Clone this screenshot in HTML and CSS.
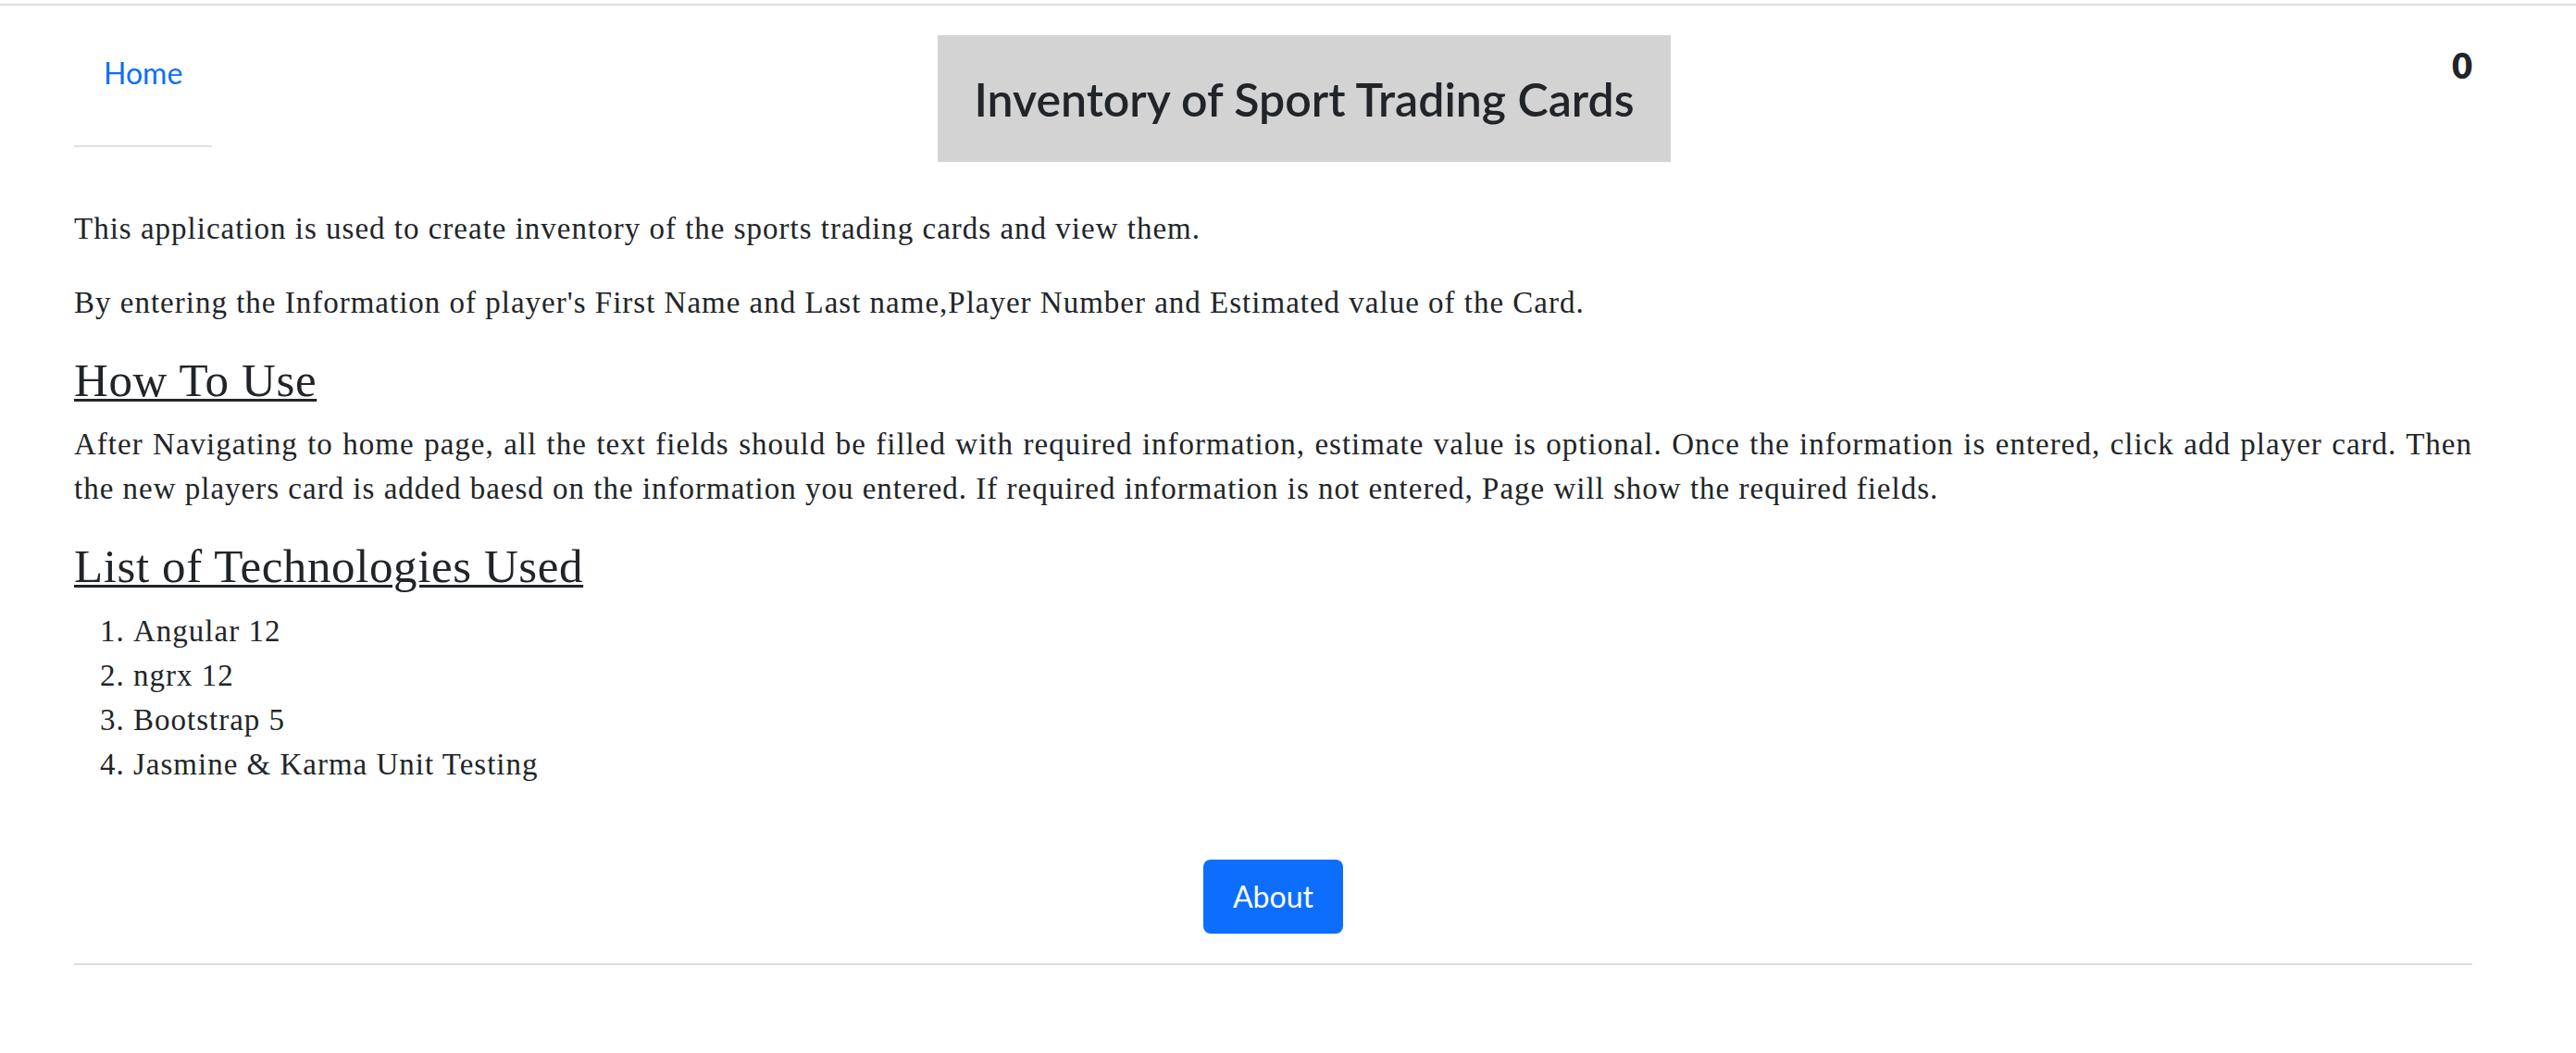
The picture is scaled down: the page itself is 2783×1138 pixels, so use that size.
FILE: index.html
```html
<!DOCTYPE html>
<html lang="en">
<head>
<meta charset="utf-8">
<title>Inventory of Sport Trading Cards</title>
<link rel="stylesheet" href="styles.css">
</head>
<body>
<div class="topline"></div>
<div class="page">
  <header class="header">
    <ul class="nav">
      <li><a class="nav-link" href="#">Home</a></li>
    </ul>
    <div class="title-box">
      <h1 class="title">Inventory of Sport Trading Cards</h1>
    </div>
    <div class="count">0</div>
  </header>
  <main class="content">
    <p class="para">This application is used to create inventory of the sports trading cards and view them.</p>
    <p class="para">By entering the Information of player's First Name and Last name,Player Number and Estimated value of the Card.</p>
    <h2 class="section-title">How To Use</h2>
    <p class="para para-justify"><span class="jline">After Navigating to home page, all the text fields should be filled with required information, estimate value is optional. Once the information is entered, click add player card. Then</span> the new players card is added baesd on the information you entered. If required information is not entered, Page will show the required fields.</p>
    <h2 class="section-title">List of Technologies Used</h2>
    <ol class="tech-list">
      <li>Angular 12</li>
      <li>ngrx 12</li>
      <li>Bootstrap 5</li>
      <li>Jasmine &amp; Karma Unit Testing</li>
    </ol>
    <div class="actions">
      <button class="btn-about" type="button">About</button>
    </div>
    <hr class="rule">
  </main>
</div>
</body>
</html>
```

FILE: styles.css
```css
html, body {
  margin: 0;
  padding: 0;
  background: #ffffff;
}

body {
  color: #212529;
  font-family: "Liberation Serif", "Times New Roman", serif;
  font-size: 33px;
  line-height: 48px;
  letter-spacing: 1px;
}

.topline {
  margin-top: 4px;
  height: 2px;
  background: #dcdde0;
}

.page {
  padding: 0 112px 0 80px;
}

.header {
  display: grid;
  grid-template-columns: 933px 792px 1fr;
  align-items: start;
  padding-top: 32px;
  margin-bottom: 48px;
  font-family: Lato, "Open Sans", "Liberation Sans", sans-serif;
  letter-spacing: 0;
}

.nav {
  justify-self: start;
  list-style: none;
  margin: 0;
  padding: 0 0 39px;
  border-bottom: 2px solid #dee2e6;
}

.nav-link {
  display: block;
  padding: 17px 32px 15px;
  font-size: 32px;
  line-height: 48px;
  color: #0d6efd;
  text-decoration: none;
}

.title-box {
  background: #d3d3d3;
  padding: 40px 0 38px;
  text-align: center;
}

.title {
  margin: 0;
  font-size: 50px;
  line-height: 58.8px;
  font-weight: 600;
  white-space: nowrap;
  color: #212529;
}

.count {
  justify-self: end;
  margin-top: 8px;
  font-size: 38px;
  line-height: 48px;
  font-weight: 800;
  color: #212529;
}

.para {
  margin: 0 0 32px;
}

.para-justify {
  text-align: justify;
}

.jline {
  display: block;
  text-align-last: justify;
}

.section-title {
  margin: 0 0 16px;
  font-size: 51px;
  line-height: 57.6px;
  font-weight: 400;
  letter-spacing: 0.6px;
  text-decoration: underline;
  text-decoration-thickness: 3px;
  text-underline-offset: 3px;
}

.tech-list {
  margin: 0;
  padding-left: 64px;
}

.actions {
  margin-top: 79px;
  text-align: center;
}

.btn-about {
  display: inline-block;
  margin: 0;
  padding: 16px 32px;
  border: 0;
  border-radius: 8px;
  background: #0d6efd;
  color: #ffffff;
  font-family: Lato, "Open Sans", "Liberation Sans", sans-serif;
  font-size: 32px;
  line-height: 48px;
  letter-spacing: 0;
  cursor: pointer;
}

.rule {
  margin: 32px 0 0;
  border: 0;
  border-top: 2px solid #dcdee1;
  height: 0;
}
```
